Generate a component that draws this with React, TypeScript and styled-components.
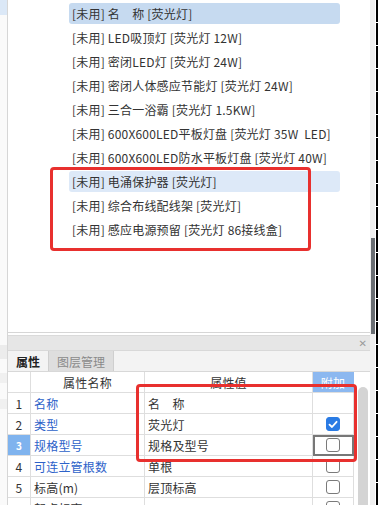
import React from 'react';
import styled, { createGlobalStyle } from 'styled-components';

const GlobalStyle = createGlobalStyle`
  html, body {
    margin: 0;
    padding: 0;
    background: #fff;
    overflow: hidden;
  }
  body {
    font-family: "Noto Sans CJK SC", "Noto Sans", sans-serif;
    font-size: 12px;
    color: #333;
  }
`;

const Screen = styled.div`
  position: relative;
  display: flex;
  width: 378px;
  height: 505px;
  overflow: hidden;
`;

const LeftStrip = styled.div`
  width: 7px;
  border-right: 1px solid #d6d6d6;
  background: #fafafa;
  display: flex;
  flex-direction: column;
`;

const StripBand = styled.div<{ $h: number; $c: string; $mt?: number }>`
  flex-shrink: 0;
  height: ${p => p.$h}px;
  margin-top: ${p => p.$mt || 0}px;
  background: ${p => p.$c};
`;

const Main = styled.div`
  width: 362px;
  display: flex;
  flex-direction: column;
  overflow: hidden;
`;

const ListPanel = styled.div`
  flex-shrink: 0;
  height: 333px;
  border-bottom: 1px solid #d6d6d6;
  padding-top: 3px;
  box-sizing: border-box;
  background: #fff;
`;

const ListRow = styled.div<{ $sel?: 'strong' | 'light' }>`
  margin-left: 61px;
  width: 271px;
  height: 21px;
  margin-bottom: 3px;
  padding-left: 3px;
  box-sizing: border-box;
  border-radius: 3px;
  line-height: 21px;
  letter-spacing: 0.2px;
  white-space: pre;
  color: #333;
  background: ${p => (p.$sel === 'strong' ? '#c6daf0' : p.$sel === 'light' ? '#dde9f8' : 'transparent')};
`;

const PropPanel = styled.div`
  margin-top: 2px;
  width: 363px;
  flex: 1;
  min-height: 0;
  overflow: hidden;
  border-right: 1px solid #d0d0d0;
  background: #f3f3f3;
  display: flex;
  flex-direction: column;
`;

const TitleBar = styled.div`
  flex-shrink: 0;
  height: 15px;
  box-sizing: border-box;
  background: #e6e6e6;
  border-top: 1px solid #dadada;
  display: flex;
  justify-content: flex-end;
  align-items: center;
  padding-right: 4px;
  color: #9a9a9a;
  font-family: "DejaVu Sans", sans-serif;
  font-size: 10px;
`;

const Tabs = styled.div`
  flex-shrink: 0;
  height: 22px;
  display: flex;
  border-top: 1px solid #d8d8d8;
  border-bottom: 1px solid #d8d8d8;
  box-sizing: border-box;
`;

const Tab = styled.div<{ $active?: boolean }>`
  width: ${p => (p.$active ? 41 : 65)}px;
  box-sizing: border-box;
  display: flex;
  align-items: center;
  justify-content: center;
  font-size: 12px;
  font-weight: ${p => (p.$active ? 700 : 400)};
  color: ${p => (p.$active ? '#222' : '#8a8a8a')};
  background: ${p => (p.$active ? '#f3f3f3' : '#dedede')};
  border-right: 1px solid #cfcfcf;
`;

const TableArea = styled.div`
  flex: 1;
  display: flex;
  background: #fff;
`;

const Grid = styled.div`
  width: 346px;
  display: grid;
  grid-template-columns: 23px 114px 168px 41px;
  grid-auto-rows: 21px;
  align-content: start;
`;

const Cell = styled.div<{ $align?: 'center' | 'left'; $color?: string }>`
  border-right: 1px solid #dedede;
  border-bottom: 1px solid #dedede;
  box-sizing: border-box;
  display: flex;
  align-items: center;
  justify-content: ${p => (p.$align === 'center' ? 'center' : 'flex-start')};
  padding-left: ${p => (p.$align === 'center' ? 0 : 3)}px;
  color: ${p => p.$color || '#333'};
  letter-spacing: 0.2px;
  white-space: pre;
  position: relative;
`;

const NumCell = styled(Cell)<{ $active?: boolean }>`
  background: ${p => (p.$active ? '#7fb3ee' : '#fff')};
  color: ${p => (p.$active ? '#fff' : '#333')};
  font-weight: ${p => (p.$active ? 700 : 400)};
  font-size: ${p => (p.$active ? 10 : 12)}px;
`;

const ExtraHead = styled(Cell)`
  background: #8cb8f0;
  color: #fff;
  border-right-color: #8cb8f0;
`;

const CheckCell = styled(Cell)<{ $focus?: boolean }>`
  outline: ${p => (p.$focus ? '2px solid #777' : 'none')};
  outline-offset: -2px;
`;

const Box = styled.div<{ $checked?: boolean }>`
  width: 14px;
  height: 14px;
  box-sizing: border-box;
  border-radius: 3px;
  border: 1px solid ${p => (p.$checked ? '#2a7be4' : '#7a7a7a')};
  background: ${p => (p.$checked ? '#2a7be4' : '#fff')};
  display: flex;
  align-items: center;
  justify-content: center;
`;

const ScrollCol = styled.div`
  width: 17px;
  display: flex;
  justify-content: center;
  padding-top: 15px;
`;

const ScrollTrack = styled.div`
  width: 10px;
  height: 200px;
  border-radius: 5px;
  background: #d4d4d4;
`;

const RightStrip = styled.div`
  width: 8px;
  display: flex;
`;

const RightTrack = styled.div`
  width: 5px;
  background: #f0f0f0;
  padding-top: 238px;
`;

const RightThumb = styled.div`
  width: 4px;
  height: 96px;
  margin-left: 1px;
  background: #6a6e73;
`;

const TickBar = styled.div`
  flex: 1;
  margin-left: 1px;
  background: repeating-linear-gradient(
    to bottom,
    #000 0px,
    #000 22px,
    #fff 22px,
    #fff 23px
  );
`;

const Mark = styled.div<{ $x: number; $y: number; $w: number; $h: number }>`
  position: absolute;
  left: ${p => p.$x}px;
  top: ${p => p.$y}px;
  width: ${p => p.$w}px;
  height: ${p => p.$h}px;
  border: 3px solid #e8302e;
  border-radius: 4px;
  box-sizing: border-box;
  pointer-events: none;
`;

const listItems: { text: string; sel?: 'strong' | 'light' }[] = [
  { text: '[未用] 名　称 [荧光灯]', sel: 'strong' },
  { text: '[未用] LED吸顶灯 [荧光灯 12W]' },
  { text: '[未用] 密闭LED灯 [荧光灯 24W]' },
  { text: '[未用] 密闭人体感应节能灯 [荧光灯 24W]' },
  { text: '[未用] 三合一浴霸 [荧光灯 1.5KW]' },
  { text: '[未用] 600X600LED平板灯盘 [荧光灯 35W  LED]' },
  { text: '[未用] 600X600LED防水平板灯盘 [荧光灯 40W]' },
  { text: '[未用] 电涌保护器 [荧光灯]', sel: 'light' },
  { text: '[未用] 综合布线配线架 [荧光灯]' },
  { text: '[未用] 感应电源预留 [荧光灯 86接线盒]' },
];

const props = [
  { name: '名称', value: '名　称', blue: true, check: null as null | boolean },
  { name: '类型', value: '荧光灯', blue: true, check: true },
  { name: '规格型号', value: '规格及型号', blue: true, check: false, active: true },
  { name: '可连立管根数', value: '单根', blue: true, check: false },
  { name: '标高(m)', value: '层顶标高', blue: false, check: false },
  { name: '起点标高', value: '', blue: false, check: false },
];

const Tick = () => (
  <svg width="10" height="9" viewBox="0 0 10 9">
    <path d="M1.5 4.6 L4 7 L8.6 1.8" fill="none" stroke="#fff" strokeWidth="1.8" strokeLinecap="round" strokeLinejoin="round" />
  </svg>
);

const App = () => (
  <>
    <GlobalStyle />
    <Screen>
      <LeftStrip>
        <StripBand $h={15} $c="#dbe8f7" />
        <StripBand $h={14} $c="#ececec" $mt={330} />
        <StripBand $h={10} $c="#f0f0f0" $mt={14} />
        <StripBand $h={10} $c="#f0f0f0" $mt={16} />
      </LeftStrip>
      <Main>
        <ListPanel>
          {listItems.map((item, i) => (
            <ListRow key={i} $sel={item.sel}>{item.text}</ListRow>
          ))}
        </ListPanel>
        <PropPanel>
          <TitleBar>✕</TitleBar>
          <Tabs>
            <Tab $active>属性</Tab>
            <Tab>图层管理</Tab>
          </Tabs>
          <TableArea>
            <Grid>
              <Cell $align="center" />
              <Cell $align="center">属性名称</Cell>
              <Cell $align="center">属性值</Cell>
              <ExtraHead $align="center">附加</ExtraHead>
              {props.map((p, i) => (
                <React.Fragment key={i}>
                  <NumCell $align="center" $active={p.active}>{i + 1}</NumCell>
                  <Cell $color={p.blue ? '#2d62c9' : '#333'}>{p.name}</Cell>
                  <Cell>{p.value}</Cell>
                  <CheckCell $align="center" $focus={p.active}>
                    {p.check !== null && <Box $checked={p.check}>{p.check && <Tick />}</Box>}
                  </CheckCell>
                </React.Fragment>
              ))}
            </Grid>
            <ScrollCol>
              <ScrollTrack />
            </ScrollCol>
          </TableArea>
        </PropPanel>
      </Main>
      <RightStrip>
        <RightTrack>
          <RightThumb />
        </RightTrack>
        <TickBar />
      </RightStrip>
      <Mark $x={50} $y={167} $w={261} $h={84} />
      <Mark $x={136} $y={384} $w={221} $h={78} />
    </Screen>
  </>
);

export default App;
